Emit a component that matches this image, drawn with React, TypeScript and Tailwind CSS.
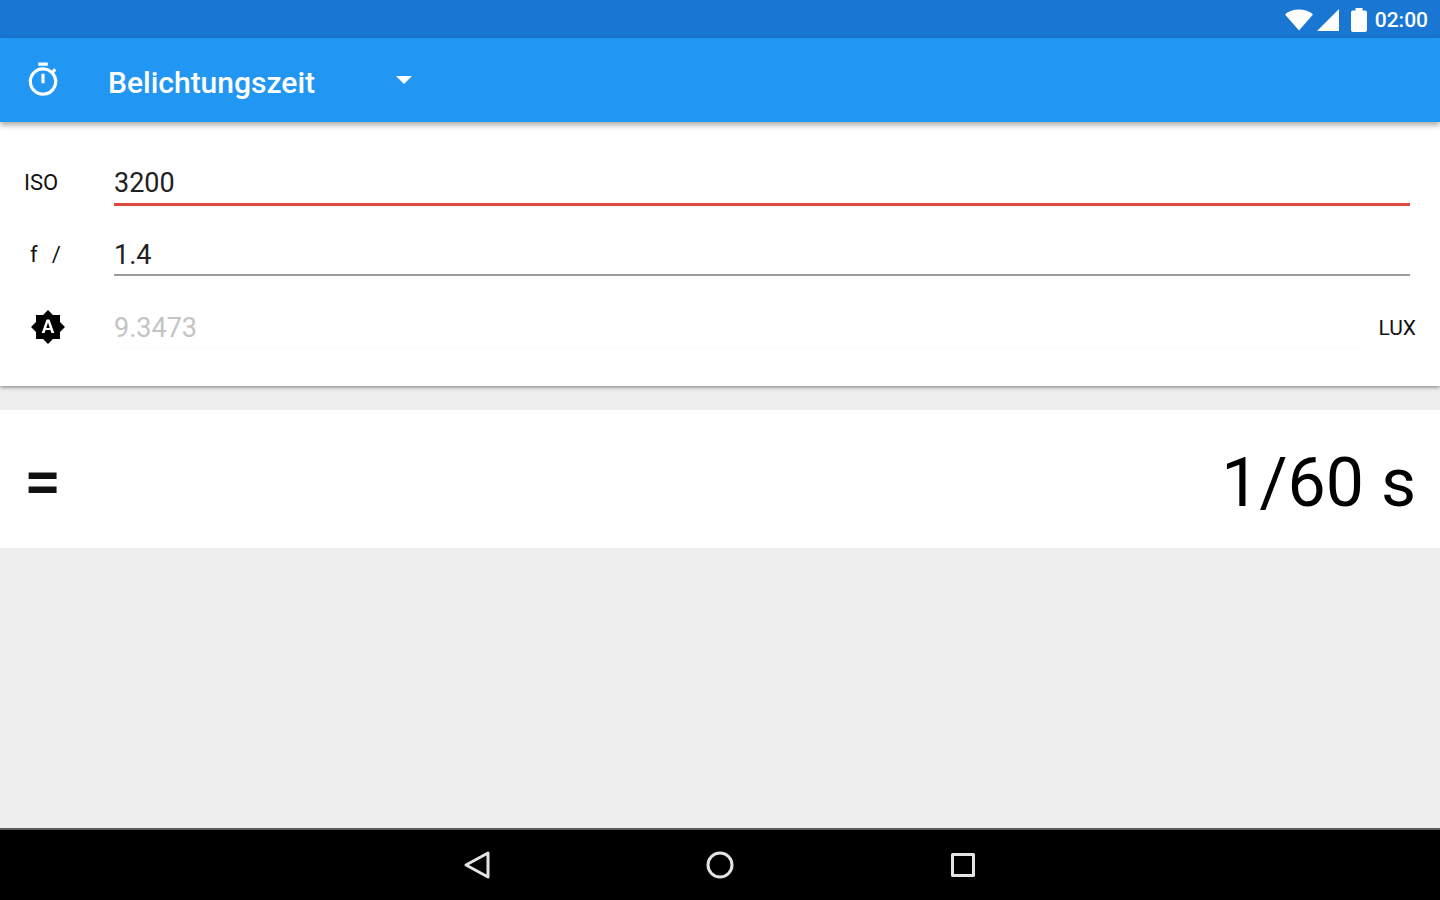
import { useState } from "react";
import type { ReactNode } from "react";
import { MdBrightnessAuto, MdOutlineTimer } from "react-icons/md";

function StatusBar() {
  return (
    <div className="flex h-[38px] items-center justify-end bg-[#1976d2] pt-0.5 pr-3 text-white">
      <svg className="mr-1 h-[22px] w-7" viewBox="0 0 28 22" fill="currentColor" aria-hidden="true">
        <path d="M0 5.6C3.600 2.300 8.500 .6 14 .6S24.400 2.300 28 5.600L14 21.400Z" />
      </svg>
      <svg className="mr-3 h-[22px] w-[22px]" viewBox="0 0 22 22" fill="currentColor" aria-hidden="true">
        <path d="M0 22 22 0V22Z" />
      </svg>
      <svg className="mr-2 h-6 w-4" viewBox="0 0 16 24" fill="currentColor" aria-hidden="true">
        <path d="M4.500 0h7v2.500H14q2 0 2 2V22q0 2-2 2H2q-2 0-2-2V4.500q0-2 2-2h2.500Z" />
      </svg>
      <time className="text-[21px] leading-6 font-medium">02:00</time>
    </div>
  );
}

function AppBar() {
  return (
    <header className="z-10 flex h-[84px] items-center bg-[#2196f3] pl-6 text-white shadow-[0_3px_6px_rgba(0,0,0,0.35)]">
      <MdOutlineTimer className="size-[38px]" aria-hidden="true" />
      <div className="ml-[46px] grid w-[306px] items-center">
        <select
          aria-label="Berechnung"
          className="col-start-1 row-start-1 h-12 w-full appearance-none bg-transparent pt-1 text-[30px] font-medium outline-none"
        >
          <option className="text-black">Belichtungszeit</option>
        </select>
        <svg
          className="pointer-events-none col-start-1 row-start-1 mr-0.5 h-2 w-4 justify-self-end"
          viewBox="0 0 16 8"
          fill="currentColor"
          aria-hidden="true"
        >
          <path d="M0 0h16L8 8Z" />
        </svg>
      </div>
    </header>
  );
}

type FieldProps = {
  id: string;
  label: ReactNode;
  initial: string;
  line: string;
  unit?: string;
  disabled?: boolean;
};

function Field({ id, label, initial, line, unit, disabled }: FieldProps) {
  const [value, setValue] = useState(initial);
  return (
    <div className="flex h-[72px] items-center pr-6 pl-6">
      <label htmlFor={id} className="flex w-[90px] shrink-0 items-center pt-0.5 text-[22px] leading-8">
        {label}
      </label>
      <input
        id={id}
        value={value}
        disabled={disabled}
        inputMode="decimal"
        onChange={(e) => setValue(e.target.value)}
        className={`min-w-0 flex-1 bg-transparent pt-1 text-[27px] text-[#212121] outline-none disabled:text-[#c4c4c4] ${line}`}
      />
      {unit && <span className="ml-4 pt-1 text-[21px] leading-8">{unit}</span>}
    </div>
  );
}

function NavBar() {
  const button = "flex size-12 items-center justify-center";
  const icon = "size-8 fill-none stroke-[#e4e4e4] stroke-3";
  return (
    <nav className="flex h-[72px] items-center justify-center gap-[195px] border-t-2 border-[#5a5a5a] bg-black">
      <button type="button" aria-label="Zurück" className={button}>
        <svg className={icon} viewBox="0 0 32 32" strokeLinejoin="round">
          <path d="M27 4v24L5 16Z" />
        </svg>
      </button>
      <button type="button" aria-label="Startseite" className={button}>
        <svg className={icon} viewBox="0 0 32 32">
          <circle cx="16" cy="16" r="12" />
        </svg>
      </button>
      <button type="button" aria-label="Übersicht" className={button}>
        <svg className={icon} viewBox="0 0 32 32" strokeLinejoin="round">
          <path d="M5.500 5.500h21v21h-21Z" />
        </svg>
      </button>
    </nav>
  );
}

export default function App() {
  return (
    <div className="flex min-h-screen flex-col bg-[#eeeeee] font-[Roboto,sans-serif] text-[#111111]">
      <StatusBar />
      <AppBar />
      <main className="flex flex-1 flex-col gap-6">
        <form className="bg-white pt-6 pb-6 shadow-[0_1px_4px_rgba(0,0,0,0.5)]">
          <Field id="iso" label="ISO" initial="3200" line="mr-1.5 h-12 border-b-3 border-[#e04a3c]" />
          <Field
            id="aperture"
            label={<span className="flex gap-3.5 pl-1.5"><span>f</span><span>/</span></span>}
            initial="1.4"
            line="mr-1.5 h-11 border-b-2 border-[#9b9b9b]"
          />
          <Field
            id="lux"
            label={<MdBrightnessAuto className="ml-1.5 size-9 text-black" aria-label="Helligkeit" />}
            initial="9.3473"
            line="h-11 border-b border-[#fafafa]"
            unit="LUX"
            disabled
          />
        </form>
        <section className="flex h-[138px] items-center justify-between bg-white px-6 pt-2">
          <span className="text-[66px] leading-none font-medium">=</span>
          <output className="text-[68px] leading-none text-black">1/60 s</output>
        </section>
      </main>
      <NavBar />
    </div>
  );
}
